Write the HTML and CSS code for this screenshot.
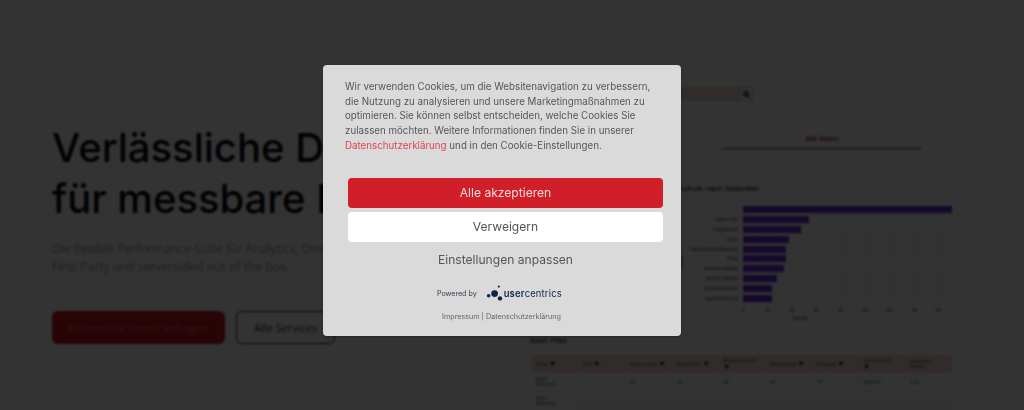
FILE: index.html
```html
<!DOCTYPE html>
<html lang="de">
<head>
  <meta charset="UTF-8">
  <meta name="viewport" content="width=device-width, initial-scale=1.0">
  <title>Performance-Suite</title>
  <link rel="stylesheet" href="styles.css">
</head>
<body>
  <div class="page">
    <section class="hero">
      <h1>Verlässliche Daten<br>für messbare Erfolge</h1>
      <p class="lead">Die flexible Performance-Suite für Analytics, Onsite und Ads.<br>First-Party und serversided out of the box.</p>
      <div class="hero-actions">
        <a class="btn btn-primary">Kostenlose Demo anfragen</a>
        <a class="btn btn-outline">Alle Services</a>
      </div>
    </section>

    <section class="report">
      <div class="search">
        <div class="search-field"></div>
        <div class="search-btn">
          <svg width="7" height="7" viewBox="0 0 10 10"><circle cx="4" cy="4" r="3" fill="none" stroke="#000" stroke-width="2"/><path d="M6.5 6.5 9.5 9.5" stroke="#000" stroke-width="2"/></svg>
        </div>
      </div>
      <div class="tab">Alle Seiten</div>

      <h3 class="chart-title">Aufrufe nach Seitentitel</h3>
      <div class="chart">
        <div class="chart-side">Seiten</div>
        <div class="chart-body">
          <div class="rows">
            <div class="row"><span class="row-label">/</span><span class="row-track"><i style="width: 209px"></i></span></div>
            <div class="row"><span class="row-label">/ueber-uns/</span><span class="row-track"><i style="width: 66px"></i></span></div>
            <div class="row"><span class="row-label">/integrations/</span><span class="row-track"><i style="width: 58px"></i></span></div>
            <div class="row"><span class="row-label">/jobs/</span><span class="row-track"><i style="width: 46px"></i></span></div>
            <div class="row"><span class="row-label">/datenschutzerklaerung/</span><span class="row-track"><i style="width: 43px"></i></span></div>
            <div class="row"><span class="row-label">/blog/</span><span class="row-track"><i style="width: 43px"></i></span></div>
            <div class="row"><span class="row-label">/service-tracking/</span><span class="row-track"><i style="width: 41px"></i></span></div>
            <div class="row"><span class="row-label">/service-affiliate/</span><span class="row-track"><i style="width: 34px"></i></span></div>
            <div class="row"><span class="row-label">/private-network/</span><span class="row-track"><i style="width: 29px"></i></span></div>
            <div class="row"><span class="row-label">/agenturloesung/</span><span class="row-track"><i style="width: 29px"></i></span></div>
          </div>
          <div class="ticks">
            <span>0</span><span>10</span><span>20</span><span>30</span><span>40</span><span>50</span><span>60</span><span>70</span><span>80</span>
          </div>
          <div class="axis-name">Aufrufe</div>
        </div>
      </div>

      <h3 class="table-title">Nach Pfad</h3>
      <table class="paths">
        <tr>
          <th>Portal <b>▼</b></th><th>Pfad <b>▼</b></th><th>Nutzer overall <b>▼</b></th><th>Neue Nutzer <b>▼</b></th><th>Bekannte Nutzer <b>▼</b></th><th>Seitenaufrufe <b>▼</b></th><th>Sitzungen <b>▼</b></th><th>Sitzungsdauer <b>▼</b></th><th>Seiten pro Sitzung</th>
        </tr>
        <tr>
          <td>EASY Marketing...</td><td>/</td><td>69</td><td>41</td><td>28</td><td>90</td><td>79</td><td>00:00:47</td><td>1,14</td>
        </tr>
        <tr>
          <td>EASY Marketing...</td><td>/ueber-uns/</td><td>20</td><td>15</td><td>7</td><td>32</td><td>26</td><td>00:00:33</td><td>1,24</td>
        </tr>
      </table>
      <div class="report-cut"></div>
    </section>
  </div>

  <div class="overlay">
    <div class="cookie-box">
      <p class="cookie-text">Wir verwenden Cookies, um die Websitenavigation zu verbessern, die Nutzung zu analysieren und unsere Marketingmaßnahmen zu optimieren. Sie können selbst entscheiden, welche Cookies Sie zulassen möchten. Weitere Informationen finden Sie in unserer <a class="cookie-link">Datenschutzerklärung</a> und in den Cookie-Einstellungen.</p>
      <div class="cookie-buttons">
        <button class="cookie-btn accept">Alle akzeptieren</button>
        <button class="cookie-btn deny">Verweigern</button>
        <button class="cookie-btn settings">Einstellungen anpassen</button>
      </div>
      <div class="powered">
        <span class="powered-label">Powered by</span>
        <svg class="uc-mark" width="18" height="18" viewBox="0 0 18 18">
          <circle cx="2.6" cy="10.8" r="1.8" fill="#0d2547"/>
          <circle cx="8.6" cy="8.6" r="3.4" fill="#0d2547"/>
          <circle cx="12.8" cy="1.6" r="1.1" fill="#0d2547"/>
          <circle cx="14" cy="13.4" r="2.2" fill="#0d2547"/>
        </svg>
        <span class="uc-name"><b>user</b>centrics</span>
      </div>
      <div class="cookie-footer">Impressum | Datenschutzerklärung</div>
    </div>
  </div>
</body>
</html>
```

FILE: styles.css
```css
* {
  box-sizing: border-box;
}
html, body {
  height: 100%;
  margin: 0;
  overflow: hidden;
}
body {
  background: white;
  font-family: 'Inter', 'Liberation Sans', sans-serif;
}
.page {
  display: flex;
  height: 410px;
  overflow: hidden;
  padding-left: 52px;
}

/* hero */
.hero {
  width: 478px;
  flex-shrink: 0;
  padding-top: 122px;
}
h1 {
  margin: 0;
  font-family: 'Inter', sans-serif;
  font-size: 40px;
  font-weight: 500;
  line-height: 51px;
  color: #05050f;
}
.lead {
  margin: 16px 0 0;
  font-family: 'Open Sans', sans-serif;
  font-size: 12.1px;
  line-height: 18px;
  color: #a0a0a0;
}
.hero-actions {
  display: flex;
  gap: 11px;
  margin-top: 35px;
}
.btn {
  display: flex;
  align-items: center;
  justify-content: center;
  height: 33px;
  border-radius: 6px;
  font-family: 'Open Sans', sans-serif;
  font-size: 11px;
}
.btn-primary {
  width: 173px;
  background: #c4141f;
  color: #c9737a;
}
.btn-outline {
  width: 99px;
  border: 1px solid #222;
  color: #333;
}

/* report picture on the right */
.report {
  position: relative;
  width: 422px;
  flex-shrink: 0;
  margin-left: 1px;
  padding-top: 87px;
}
.search {
  display: flex;
  justify-content: flex-end;
  margin-right: 200px;
  height: 14px;
}
.search-field {
  width: 150px;
  background: #f3d9d2;
  border: 1px solid #ddd;
}
.search-btn {
  display: flex;
  align-items: center;
  justify-content: center;
  width: 14px;
  border: 1px solid #bbb;
}
.tab {
  width: 198px;
  margin: 33px 0 0 192px;
  padding-bottom: 5px;
  border-bottom: 1px solid #a81822;
  font-family: 'Liberation Sans', sans-serif;
  font-size: 6.5px;
  font-weight: 700;
  line-height: 9px;
  text-align: center;
  color: #b01a24;
}
.chart-title {
  margin: 35px 0 0 147px;
  font-family: 'Liberation Sans', sans-serif;
  font-size: 7.8px;
  font-weight: 400;
  line-height: 10px;
  color: #000;
}
.chart {
  display: flex;
  margin: 11px 0 0 148px;
}
.chart-side {
  align-self: center;
  margin-top: -4px;
  width: 5px;
  writing-mode: vertical-rl;
  transform: rotate(180deg);
  font-family: 'Liberation Sans', sans-serif;
  font-size: 4.5px;
  color: #222;
}
.chart-body {
  flex: 1;
}
.row {
  display: flex;
  align-items: center;
  height: 9.8px;
}
.row-label {
  width: 59px;
  padding-right: 5px;
  text-align: right;
  font-family: 'Liberation Sans', sans-serif;
  font-size: 4.5px;
  color: #333;
  white-space: nowrap;
}
.row-track {
  display: block;
  flex: 1;
  height: 100%;
  padding: 1.4px 0;
  background:
    repeating-linear-gradient(90deg, #e8e8e8 0 1px, transparent 1px 24.4px),
    linear-gradient(0deg, #e8e8e8 0 1px, transparent 1px);
}
.row-track i {
  display: block;
  height: 100%;
  background: #6a2fd8;
}
.ticks {
  display: flex;
  margin: 5px 0 0 47px;
  font-family: 'Liberation Sans', sans-serif;
  font-size: 4.5px;
  color: #333;
}
.ticks span {
  width: 24.4px;
  text-align: center;
}
.axis-name {
  margin: 3px 0 0 109px;
  font-family: 'Liberation Sans', sans-serif;
  font-size: 4.5px;
  color: #222;
}
.table-title {
  margin: 15px 0 0 -1px;
  font-family: 'Liberation Sans', sans-serif;
  font-size: 7.8px;
  font-weight: 400;
  line-height: 10px;
  color: #000;
}
.paths {
  width: 421px;
  margin: 9px 0 0 0;
  border-collapse: collapse;
  table-layout: fixed;
  font-family: 'Liberation Sans', sans-serif;
  font-size: 4.5px;
  color: #555;
}
.paths th {
  height: 18px;
  padding: 0 5px;
  background: #f3d9d2;
  font-weight: 400;
  text-align: left;
}
.paths th b {
  font-size: 7px;
  color: #000;
}
.paths td {
  height: 19px;
  padding: 0 5px;
  border-right: 1px solid #eee;
  border-bottom: 1px solid #eee;
}
.report-cut {
  position: absolute;
  top: 399px;
  left: 41px;
  right: 0;
  bottom: 0;
  background: #f7f7f7;
}

/* cookie dialog */
.overlay {
  position: fixed;
  top: 0;
  left: 0;
  width: 100%;
  height: 100%;
  display: flex;
  justify-content: center;
  align-items: flex-start;
  padding: 65px 0 0 0;
  background: rgba(0,0,0,0.8);
  backdrop-filter: blur(0.8px);
}
.cookie-box {
  width: 358px;
  height: 271px;
  margin-right: 20px;
  background: #dadada;
  border-radius: 4px;
  box-shadow: 0 1px 3px rgba(0,0,0,0.3);
}
.cookie-text {
  margin: 0;
  padding: 15px 22px 0;
  font-size: 9.75px;
  line-height: 14.7px;
  color: #555;
}
.cookie-link {
  color: #e0434b;
}
.cookie-buttons {
  display: flex;
  flex-direction: column;
  gap: 4px;
  margin-top: 24px;
  padding: 0 18px 0 25px;
}
.cookie-btn {
  height: 30px;
  border: none;
  border-radius: 4px;
  font-family: 'Inter', sans-serif;
  font-size: 12.1px;
  cursor: pointer;
}
.accept {
  background: #d01f28;
  color: #f6dcdd;
}
.deny {
  background: white;
  color: #555;
}
.settings {
  margin-top: -1px;
  background: none;
  color: #555;
}
.powered {
  display: flex;
  align-items: center;
  margin: 10px 0 0 114px;
  color: #0d2547;
}
.powered-label {
  font-size: 7.1px;
  color: #333c50;
}
.uc-mark {
  margin-left: 9px;
}
.uc-name {
  font-size: 9.4px;
  letter-spacing: 0.2px;
}
.uc-name b {
  font-weight: 600;
}
.cookie-footer {
  margin: 9px 0 0 119px;
  font-size: 7.2px;
  color: #666;
}
```
